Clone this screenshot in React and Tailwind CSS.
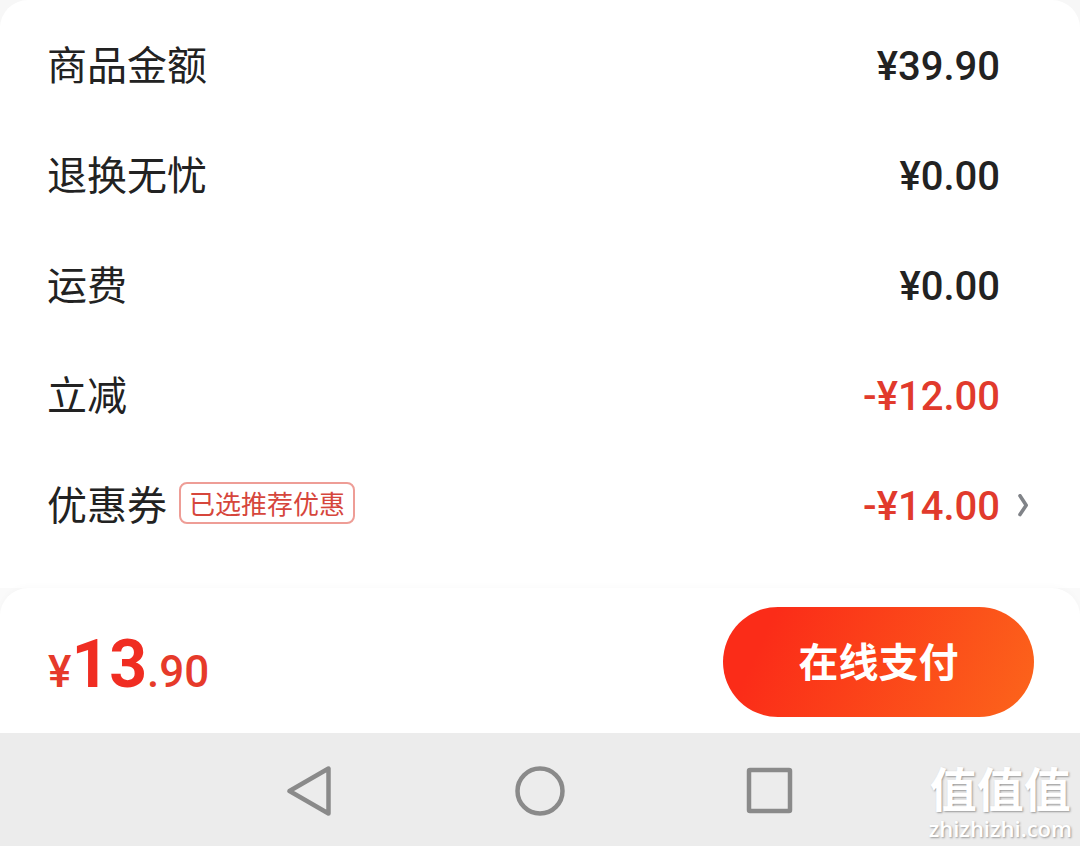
const labelFont = 'font-["Noto_Sans_CJK_SC",sans-serif]';
const numberFont = 'font-[Roboto,sans-serif]';

const rows = [
  { label: '商品金额', amount: '¥39.90' },
  { label: '退换无忧', amount: '¥0.00' },
  { label: '运费', amount: '¥0.00' },
  { label: '立减', amount: '-¥12.00', discount: true },
  { label: '优惠券', amount: '-¥14.00', discount: true, tag: '已选推荐优惠', more: true },
];

const PriceRow = ({ label, amount, discount, tag, more }) => (
  <div className="flex h-[110px] items-center pr-12 pl-[47px]">
    <dt className="flex items-center gap-3 pb-1.5 text-[40px] leading-[60px] text-[#222]">
      {label}
      {tag && (
        <span className="rounded-lg border-2 border-[#ee9d96] px-2 text-[26px] leading-[38px] text-[#d6463c]">
          {tag}
        </span>
      )}
    </dt>
    <dd className={`${numberFont} ml-auto pt-0.5 text-[40px] leading-[60px] font-medium ${discount ? 'text-[#e13a2c]' : 'text-[#222]'}`}>
      {amount}
    </dd>
    <dd className="flex w-8 justify-end">
      {more && (
        <button type="button" aria-label="优惠券">
          <svg className="h-6 w-4" viewBox="0 0 16 24" fill="none" stroke="#808388" strokeWidth="3.6">
            <path d="M4 1.8 L10.2 11.2 L4 20.6" strokeLinecap="round" strokeLinejoin="round" />
          </svg>
        </button>
      )}
    </dd>
  </div>
);

const NavButton = ({ label, children }) => (
  <button type="button" aria-label={label} className="flex w-[230px] justify-center">
    <svg className="size-[50px]" viewBox="0 0 50 50" fill="none" stroke="#8a8a8a" strokeWidth="4.5" strokeLinejoin="round">
      {children}
    </svg>
  </button>
);

const App = () => (
  <div className={`${labelFont} bg-[#f7f7f7]`}>
    <main className="rounded-t-[28px] bg-white pt-[11px] pb-[27px]">
      <dl>
        {rows.map((row) => (
          <PriceRow key={row.label} {...row} />
        ))}
      </dl>
    </main>

    {/* Payment bar */}
    <div className="bg-[#fafafa]">
      <footer className="flex items-center justify-between rounded-t-[28px] bg-white pt-[19px] pr-[46px] pb-4 pl-12 shadow-[0_-2px_6px_rgba(0,0,0,0.02)]">
        <p className={`${numberFont} flex items-baseline pt-3 text-[44px] leading-[80px] font-medium text-[#e63a2a]`}>
          <span>¥</span>
          <strong className="text-[66px] font-bold text-[#f02d22]">13</strong>
          <span>.90</span>
        </p>
        <button
          type="button"
          className="h-[110px] w-[311px] rounded-full bg-linear-[115deg] from-[#fb2c18] from-15% to-[#fc651b] pb-1 text-[40px] font-bold text-white"
        >
          在线支付
        </button>
      </footer>
    </div>

    {/* System navigation */}
    <nav className="relative flex h-[113px] items-center justify-center bg-[#ececec] pt-0.5">
      <NavButton label="返回">
        <path d="M4.5 25 L43.5 2.5 V47.5 Z" />
      </NavButton>
      <NavButton label="主页">
        <circle cx="25" cy="25" r="22.5" />
      </NavButton>
      <NavButton label="最近任务">
        <rect x="4" y="4" width="41" height="41" rx="1" />
      </NavButton>
      <div className="absolute right-2 bottom-1.5 font-['Open_Sans','Noto_Sans_CJK_SC',sans-serif] text-center text-white [text-shadow:1px_1px_2px_#999]">
        <p className="text-[47px] leading-[54px] font-bold">值值值</p>
        <p className="text-[22px] leading-6 font-semibold">zhizhizhi.com</p>
      </div>
    </nav>
  </div>
);

export default App;
